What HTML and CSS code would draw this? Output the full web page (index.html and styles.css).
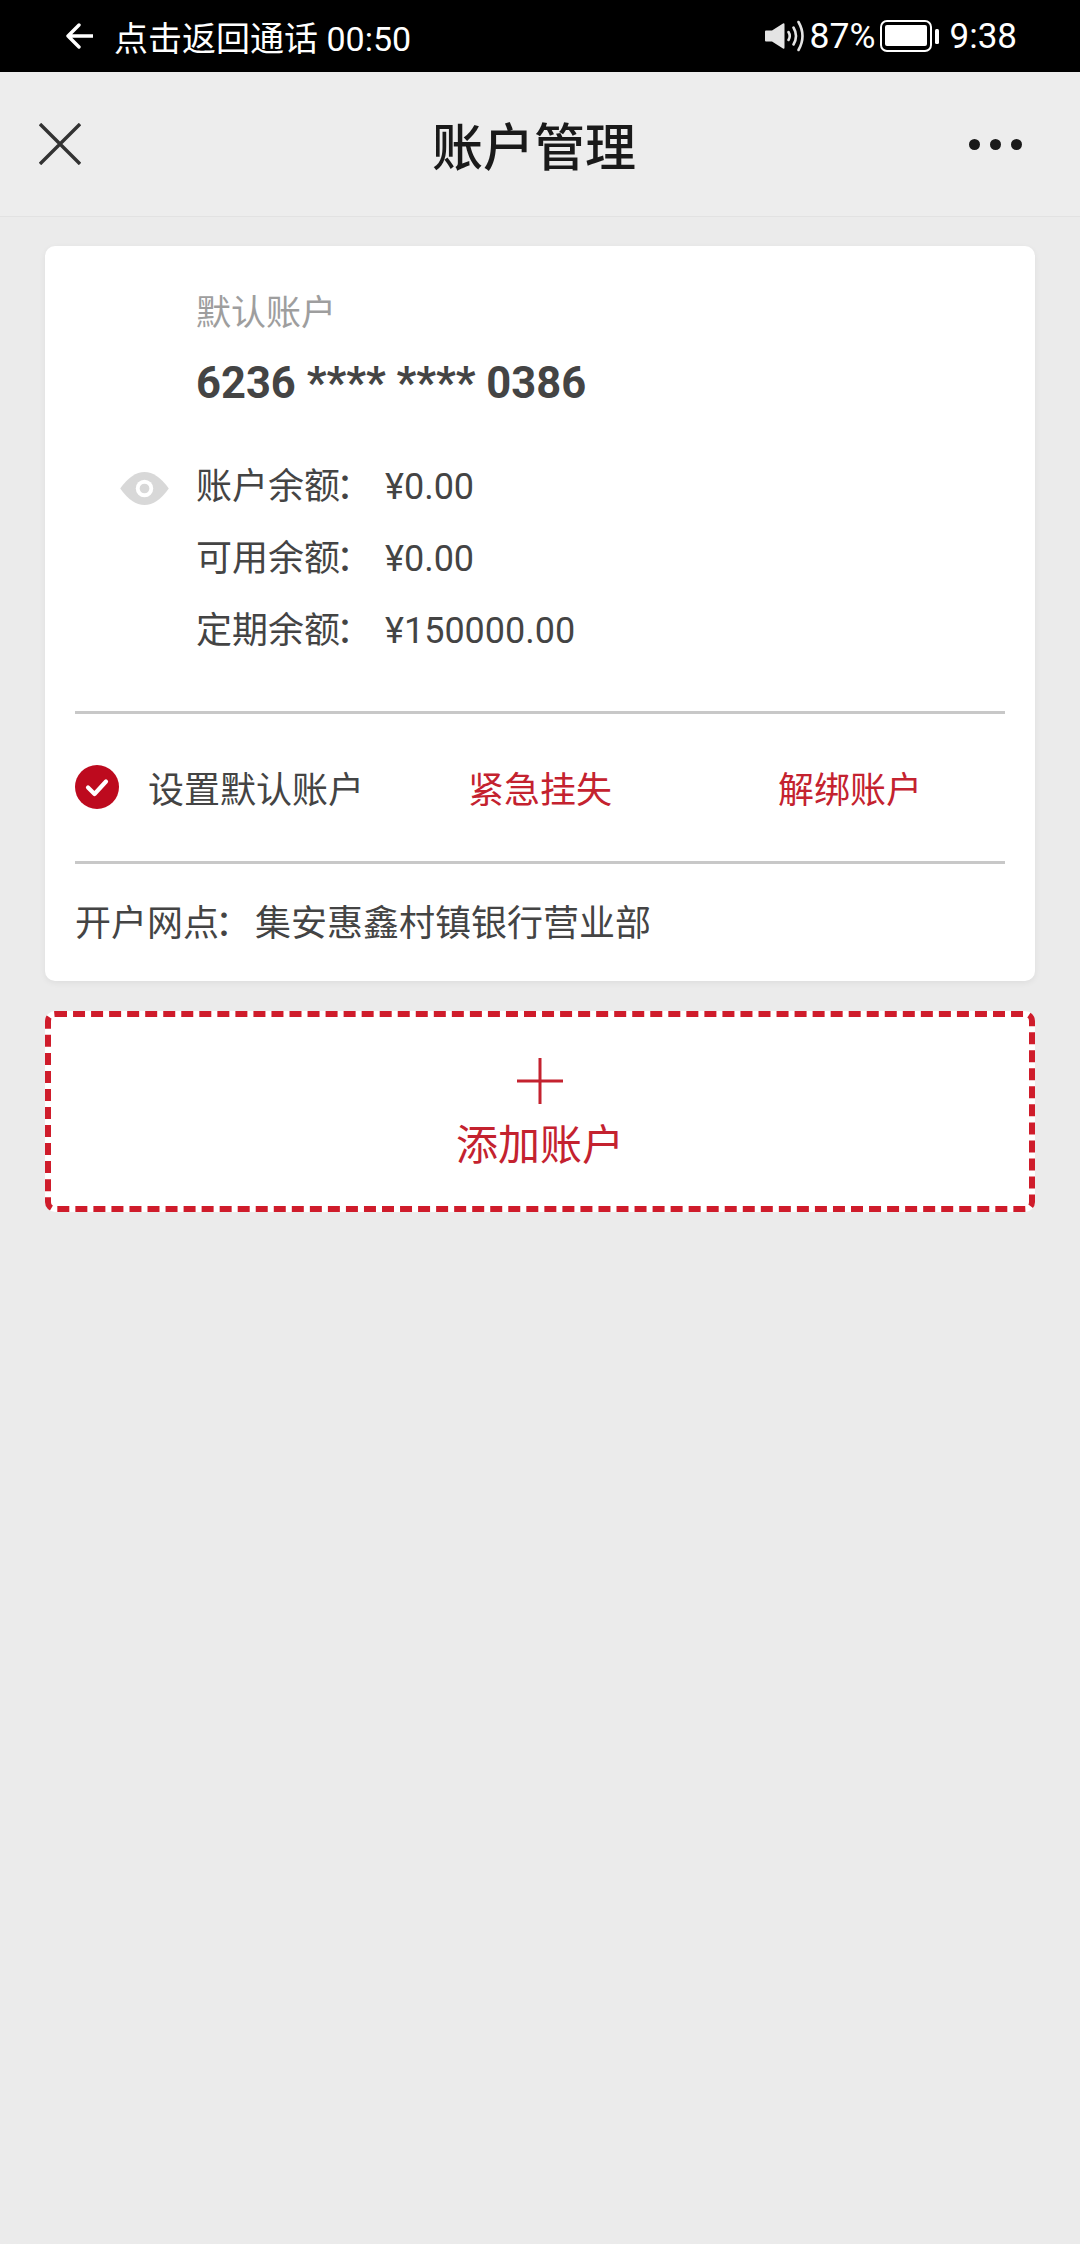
FILE: index.html
```html
<!DOCTYPE html>
<html lang="zh-CN">
<head>
  <meta charset="UTF-8">
  <meta name="viewport" content="width=device-width, initial-scale=1.0">
  <title>账户管理</title>
  <link rel="stylesheet" href="styles.css">
</head>
<body>
<div class="status-bar">
  <div class="call-back">
    <svg class="back-arrow" width="28" height="28" viewBox="0 0 28 28">
      <path d="M14 3 3 14l11 11M3 14h25" fill="none" stroke="#fff" stroke-width="3.4" stroke-linecap="round" stroke-linejoin="round"/>
    </svg>
    <span>点击返回通话 00:50</span>
  </div>
  <div class="status-right">
    <svg class="sound" width="42" height="32" viewBox="0 0 42 32">
      <path d="M1 10.500h6L18 3.500q1.500-.8 1.500 1v23q0 1.800-1.500 1L7 21.500H1q-1 0-1-1v-9q0-1 1-1z" fill="#e4e4e4"/>
      <path d="M23.500 12q2.500 4 0 8M28.500 7.500q5 8.500 0 17M33.500 2q8 14 0 28" fill="none" stroke="#e4e4e4" stroke-width="2.600" stroke-linecap="round"/>
    </svg>
    <span class="pct">87%</span>
    <svg class="battery" width="60" height="32" viewBox="0 0 60 32">
      <rect x="1" y="1" width="50" height="30" rx="6" fill="none" stroke="#fff" stroke-width="2"/>
      <rect x="5" y="5" width="42" height="21" rx="2" fill="#fff"/>
      <rect x="55" y="9" width="4" height="15" rx="1.500" fill="#fff"/>
    </svg>
    <span class="clock">9:38</span>
  </div>
</div>

<div class="header">
  <svg class="close" width="42" height="42" viewBox="0 0 42 42">
    <path d="M1 1l40 40M41 1 1 41" stroke="#333" stroke-width="3.400" fill="none"/>
  </svg>
  <h1>账户管理</h1>
  <div class="more"><i></i><i></i><i></i></div>
</div>

<div class="content">
  <div class="card">
    <div class="account">
      <p class="account-label">默认账户</p>
      <p class="account-no">6236 **** **** 0386</p>
      <div class="balances">
        <svg class="eye" width="49" height="33" viewBox="0 0 50 34">
          <path d="M0 17Q12 0 25 0T50 17Q38 34 25 34T0 17z" fill="#d8d8d8"/>
          <circle cx="25" cy="17" r="9" fill="#fff"/>
          <circle cx="25" cy="17" r="5" fill="#d8d8d8"/>
        </svg>
        <div class="balance-row"><span class="balance-name">账户余额<span class="colon">：</span></span><span>¥0.00</span></div>
        <div class="balance-row"><span class="balance-name">可用余额<span class="colon">：</span></span><span>¥0.00</span></div>
        <div class="balance-row"><span class="balance-name">定期余额<span class="colon">：</span></span><span>¥150000.00</span></div>
      </div>
    </div>
    <div class="actions">
      <div class="set-default">
        <svg width="44" height="44" viewBox="0 0 44 44">
          <circle cx="22" cy="22" r="22" fill="#bd0a1e"/>
          <path d="M13 22.500l6.500 6.500L31 16.500" fill="none" stroke="#fff" stroke-width="4.200" stroke-linecap="round" stroke-linejoin="round"/>
        </svg>
        <span>设置默认账户</span>
      </div>
      <div class="action-link">紧急挂失</div>
      <div class="action-link">解绑账户</div>
    </div>
    <div class="branch">开户网点<span class="colon">：</span>集安惠鑫村镇银行营业部</div>
  </div>

  <div class="add-account">
    <svg width="48" height="48" viewBox="0 0 48 48">
      <path d="M24 1v46M1 24h46" stroke="#c4222f" stroke-width="3" fill="none"/>
    </svg>
    <span>添加账户</span>
  </div>
</div>
</body>
</html>
```

FILE: styles.css
```css
* {
  box-sizing: border-box;
}
html, body {
  height: 100%;
}
body {
  margin: 0;
  background-color: #ebebeb;
  font-family: Roboto, "Noto Sans CJK SC", sans-serif;
  color: #444444;
}
p, h1 {
  margin: 0;
}
.status-bar {
  height: 72px;
  background-color: #000000;
  color: #ffffff;
  display: flex;
  justify-content: space-between;
  align-items: center;
  padding: 0 63px 0 65px;
  font-size: 34px;
}
.call-back {
  display: flex;
  align-items: center;
  gap: 21px;
}
.status-right {
  display: flex;
  align-items: center;
  font-size: 35px;
}
.pct {
  margin-left: 3px;
  font-size: 35.5px;
}
.battery {
  margin-left: 4px;
}
.clock {
  margin-left: 10px;
}
.header {
  height: 145px;
  background-color: #ededed;
  border-bottom: 1px solid #e2e2e2;
  display: flex;
  justify-content: space-between;
  align-items: center;
  padding: 0 58px 0 39px;
}
.header h1 {
  font-size: 51px;
  font-weight: 500;
  color: #1a1a1a;
  padding-left: 18px;
}
.close {
  display: block;
}
.more {
  display: flex;
  gap: 10px;
}
.more i {
  width: 11px;
  height: 11px;
  border-radius: 50%;
  background-color: #1a1a1a;
}
.content {
  padding: 29px 45px;
}
.card {
  background-color: #ffffff;
  border-radius: 10px;
  box-shadow: 0 2px 6px rgba(0, 0, 0, 0.06);
  height: 735px;
  padding: 0 30px;
}
.account {
  padding: 41px 0 0 121px;
  height: 468px;
  border-bottom: 3px solid #c8c8c8;
}
.account-label {
  font-size: 35px;
  line-height: 54px;
  color: #9e9e9e;
}
.account-no {
  font-size: 43.5px;
  line-height: 54px;
  font-weight: 700;
  margin-top: 16px;
}
.balances {
  position: relative;
  margin-top: 40px;
}
.eye {
  position: absolute;
  left: -76px;
  top: 21px;
}
.balance-row {
  display: flex;
  font-size: 36px;
  line-height: 72px;
}
.balance-name {
  width: 189px;
}
.colon {
  margin-left: -4px;
  margin-right: 4px;
}
.actions {
  display: grid;
  grid-template-columns: repeat(3, 1fr);
  align-items: center;
  height: 150px;
  padding-bottom: 2px;
  border-bottom: 3px solid #c8c8c8;
  font-size: 36px;
}
.set-default {
  display: flex;
  align-items: center;
  gap: 29px;
}
.set-default svg {
  flex: none;
}
.set-default span {
  white-space: nowrap;
}
.action-link {
  text-align: center;
  color: #c4222f;
}
.branch {
  font-size: 36px;
  line-height: 120px;
}
.add-account {
  margin-top: 30px;
  height: 201px;
  background-color: #ffffff;
  border: 6px dashed #cf1c2b;
  border-radius: 10px;
  display: flex;
  flex-direction: column;
  align-items: center;
  padding-top: 40px;
  color: #c4222f;
  font-size: 42px;
  line-height: 60px;
}
.add-account svg {
  flex: none;
  margin-bottom: 11px;
}
```
